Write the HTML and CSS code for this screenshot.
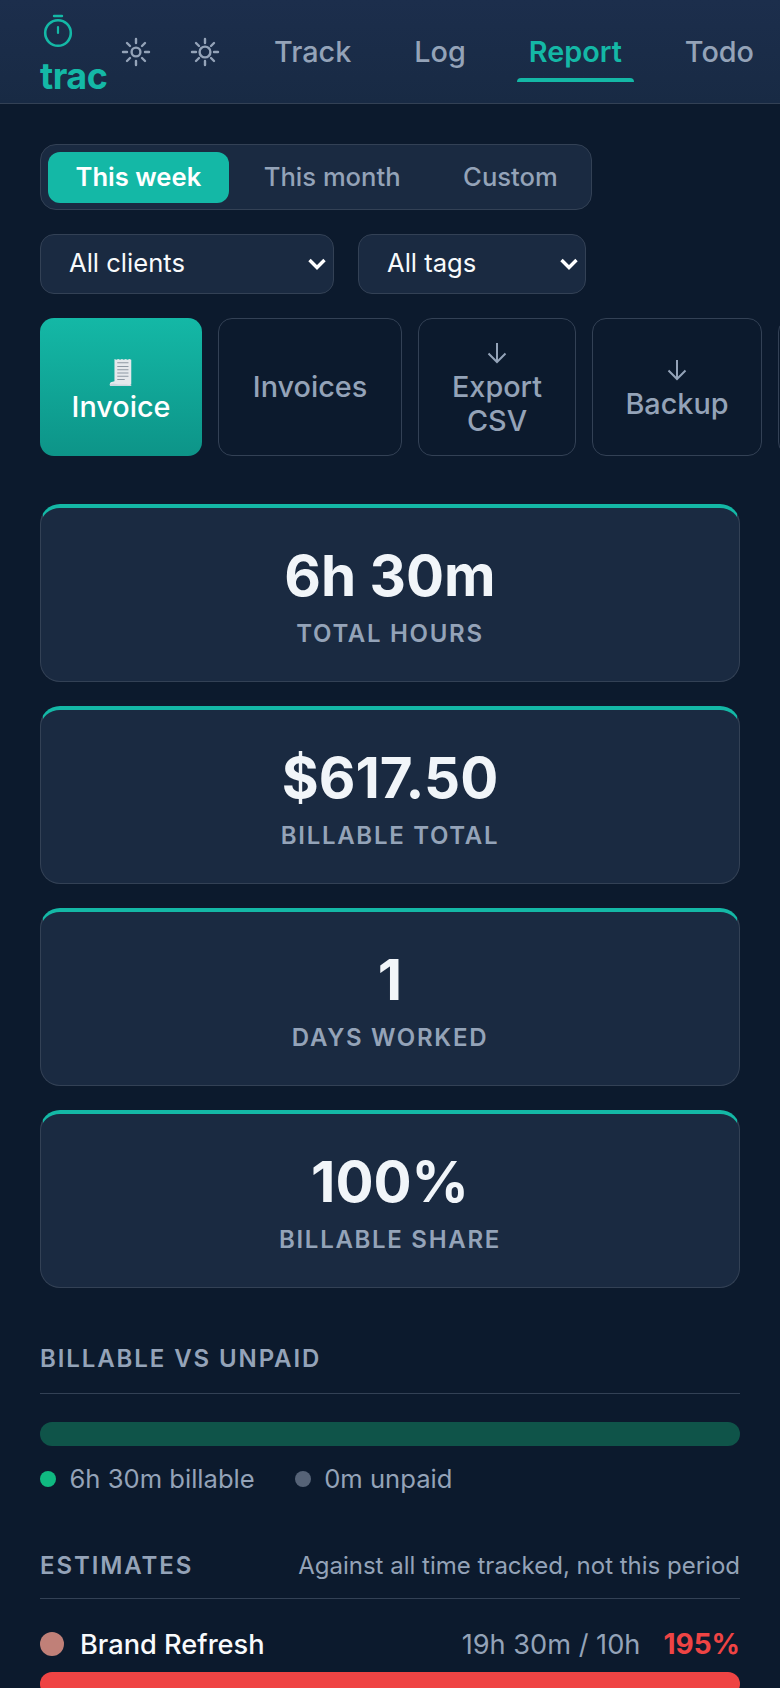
FILE: index.html
```html
<!DOCTYPE html>
<html lang="en">
<head>
<meta charset="utf-8">
<title>trac</title>
<link rel="stylesheet" href="styles.css">
</head>
<body>
<header class="topbar">
  <div class="brand">
    <svg class="brand-icon" width="30" height="36" viewBox="0 0 30 36" fill="none" stroke="#14b8a6" stroke-linecap="round">
      <path d="M11 2h8" stroke-width="2.4"/>
      <circle cx="15" cy="19" r="12.8" stroke-width="2.6"/>
      <path d="M15 13v6" stroke-width="2.2"/>
    </svg>
    <span class="brand-name">trac</span>
  </div>
  <button class="theme-btn" type="button" aria-label="Theme">
    <svg width="30" height="30" viewBox="0 0 30 30" fill="none" stroke="#94a3b8" stroke-width="2.4" stroke-linecap="round">
      <circle cx="15" cy="15" r="4.4"/>
      <path d="M15 2v4M15 24v4M2 15h4M24 15h4M6 6l3 3M21 21l3 3M6 24l3-3M21 9l3-3"/>
    </svg>
  </button>
  <button class="theme-btn" type="button" aria-label="Theme">
    <svg width="30" height="30" viewBox="0 0 30 30" fill="none" stroke="#94a3b8" stroke-width="2.4" stroke-linecap="round">
      <circle cx="15" cy="15" r="5.4"/>
      <path d="M15 2v4M15 24v4M2 15h4M24 15h4M6 6l3 3M21 21l3 3M6 24l3-3M21 9l3-3"/>
    </svg>
  </button>
  <nav class="nav">
    <a class="nav-link">Track</a>
    <a class="nav-link">Log</a>
    <a class="nav-link is-active">Report</a>
    <a class="nav-link">Todo</a>
  </nav>
</header>

<main class="page">
  <div class="segment">
    <button class="seg-btn is-active" type="button">This week</button>
    <button class="seg-btn" type="button">This month</button>
    <button class="seg-btn" type="button">Custom</button>
  </div>

  <div class="filters">
    <div class="select select-clients"><span>All clients</span>
      <svg width="18" height="12" viewBox="0 0 18 12" fill="none" stroke="#fff" stroke-width="3.4"><path d="M1.500 2l7.500 7.500L16.500 2"/></svg>
    </div>
    <div class="select select-tags"><span>All tags</span>
      <svg width="18" height="12" viewBox="0 0 18 12" fill="none" stroke="#fff" stroke-width="3.4"><path d="M1.500 2l7.500 7.500L16.500 2"/></svg>
    </div>
  </div>

  <div class="actions">
    <button class="action action-primary" type="button">
      <svg class="receipt" width="24" height="28" viewBox="0 0 24 30">
        <path d="M5 1l2 1 2-1 2 1 2-1 2 1 2-1 2 1 2-1 2 1v25.500c0 1-1 1.500-2 1.500H1c-1 0-1-.5-1-1s.5-1 1-2l4-1z" fill="#e5e8ec"/>
        <path d="M8 5h12M8 9h12M8 12.500h12M8 16h12M8 19.500h12M8 23h8" stroke="#8e98a3" stroke-width="1.100"/>
        <path d="M0 28c3-1 5-1 8 0s8 0 10 .5 4 .5 5 0V30H1c-1 0-1-1-1-2z" fill="#cfd8e0"/>
      </svg>
      <span>Invoice</span>
    </button>
    <button class="action action-invoices" type="button">Invoices</button>
    <button class="action action-export has-icon" type="button">
      <svg class="arrow" width="20" height="24" viewBox="0 0 20 24" fill="none" stroke="#94a3b8" stroke-width="2"><path d="M10 2v19M1.500 12.500L10 21l8.500-8.500"/></svg>
      <span>Export<br>CSV</span>
    </button>
    <button class="action action-backup has-icon" type="button">
      <svg class="arrow" width="20" height="24" viewBox="0 0 20 24" fill="none" stroke="#94a3b8" stroke-width="2"><path d="M10 2v19M1.500 12.500L10 21l8.500-8.500"/></svg>
      <span>Backup</span>
    </button>
    <button class="action action-more" type="button"></button>
  </div>

  <section class="stats">
    <div class="stat"><div class="stat-value">6h 30m</div><div class="stat-label">Total hours</div></div>
    <div class="stat"><div class="stat-value">$617.50</div><div class="stat-label">Billable total</div></div>
    <div class="stat"><div class="stat-value">1</div><div class="stat-label">Days worked</div></div>
    <div class="stat"><div class="stat-value">100%</div><div class="stat-label">Billable share</div></div>
  </section>

  <section class="block">
    <div class="block-head"><h2>Billable vs unpaid</h2></div>
    <div class="split-bar"></div>
    <div class="legend">
      <span class="legend-item"><i class="dot dot-green"></i>6h 30m billable</span>
      <span class="legend-item"><i class="dot dot-grey"></i>0m unpaid</span>
    </div>
  </section>

  <section class="block block-est">
    <div class="block-head"><h2>Estimates</h2><span class="note">Against all time tracked, not this period</span></div>
    <div class="est-row">
      <i class="est-dot"></i>
      <span class="est-name">Brand Refresh</span>
      <span class="est-hours">19h 30m / 10h</span>
      <span class="est-pct">195%</span>
    </div>
    <div class="est-bar"></div>
  </section>
</main>
</body>
</html>
```
FILE: styles.css
```css
* { box-sizing: border-box; }
html, body { margin: 0; height: 100%; }
html { overflow: hidden; }
body {
  width: 780px;
  height: 1688px;
  overflow: hidden;
  background: #0c1a2d;
  color: #f1f5f9;
  font-family: Inter, "Liberation Sans", sans-serif;
}
button { font-family: inherit; }

.topbar {
  height: 104px;
  padding: 13px 14px 0 40px;
  display: flex;
  align-items: flex-start;
  background: linear-gradient(180deg, #1c2e4c 0%, #182a44 100%);
  border-bottom: 1px solid #334155;
}
.brand { width: 62px; display: flex; flex-direction: column; align-items: flex-start; }
.brand-icon { display: block; margin: 1px 0 0 3px; }
.brand-name { margin-top: 7px; font-size: 36px; line-height: 38px; font-weight: 700; color: #14b8a6; letter-spacing: -0.5px; }
.theme-btn { width: 68.500px; height: 60px; margin-top: 9px; padding: 0; border: 0; background: none; display: flex; align-items: center; justify-content: center; flex: none; }
.nav { display: flex; gap: 39px; margin-left: auto; }
.nav-link {
  position: relative;
  height: 69px;
  padding: 0 12px;
  font-size: 28.800px;
  line-height: 78px;
  font-weight: 500;
  color: #94a3b8;
}
.nav-link.is-active { color: #14b8a6; font-weight: 600; }
.nav-link.is-active::after {
  content: "";
  position: absolute;
  left: 0; right: 0;
  bottom: 0;
  height: 4px;
  border-radius: 4px 4px 0 0;
  background: #14b8a6;
}

.page { padding: 40px 40px 0; }
.segment {
  width: 552px;
  height: 66px;
  padding: 6.500px;
  display: flex;
  gap: 6.500px;
  align-items: stretch;
  background: #1a2a41;
  border: 1.500px solid #334155;
  border-radius: 16px;
}
.seg-btn {
  padding: 0 28px 1px;
  border: 0;
  border-radius: 12px;
  background: none;
  font-size: 25.600px;
  font-weight: 500;
  white-space: nowrap;
  flex: none;
  color: #94a3b8;
}
.seg-btn.is-active { background: #14b8a6; color: #fff; font-weight: 600; }

.filters { margin-top: 24px; display: flex; gap: 24.500px; }
.select {
  height: 60px;
  padding: 0 7px 3px 28px;
  display: flex;
  align-items: center;
  justify-content: space-between;
  background: #1a2a41;
  border: 1.500px solid #334155;
  border-radius: 14px;
  font-size: 25.600px;
  color: #f8fafc;
}
.select svg { margin-top: 3px; }
.select-clients { width: 293.500px; }
.select-tags { width: 228px; }

.actions { margin-top: 24px; display: flex; gap: 16px; width: 800px; }
.action {
  height: 138px;
  padding: 0;
  display: flex;
  flex-direction: column;
  align-items: center;
  justify-content: center;
  background: none;
  border: 1.500px solid #334155;
  border-radius: 14px;
  font-size: 28.800px;
  font-weight: 500;
  line-height: 34px;
  color: #94a3b8;
  flex: none;
}
.action-primary {
  width: 162px;
  padding-top: 8px;
  border: 0;
  color: #fff;
  background: linear-gradient(180deg, #14b8a6 0%, #0d9488 100%);
}
.has-icon { padding-top: 5px; }
.action-invoices { width: 184px; }
.action-export { width: 158px; }
.action-backup { width: 170px; }
.action-more { width: 60px; }
.receipt { display: block; margin-bottom: 4px; }
.arrow { display: block; margin-bottom: 5px; }

.stats { margin-top: 48px; display: flex; flex-direction: column; gap: 24.500px; }
.stat {
  height: 177.500px;
  display: flex;
  flex-direction: column;
  align-items: center;
  background: #1a2a41;
  border: 1.500px solid #334155;
  border-top: 4px solid #14b8a6;
  border-radius: 20px;
}
.stat-value { margin-top: 34px; font-size: 56.500px; line-height: 68px; font-weight: 700; color: #f1f5f9; }
.stat-label { margin-top: 9px; font-size: 24px; line-height: 30px; font-weight: 600; letter-spacing: 1.700px; text-transform: uppercase; color: #94a3b8; }

.block { margin-top: 56px; }
.block-head {
  height: 50px;
  display: flex;
  align-items: flex-start;
  justify-content: space-between;
  border-bottom: 1.500px solid #334155;
}
.block-head h2 { margin: 0; font-size: 24px; line-height: 30px; font-weight: 600; letter-spacing: 1.900px; text-transform: uppercase; color: #94a3b8; }
.note { font-size: 24px; line-height: 30px; color: #94a3b8; }
.split-bar { margin-top: 28.500px; height: 24px; border-radius: 12px; background: #0f5449; }
.legend { margin-top: 16px; display: flex; gap: 40px; font-size: 25.600px; line-height: 34px; color: #94a3b8; }
.legend-item { display: flex; align-items: center; gap: 13.500px; }
.dot { width: 16px; height: 16px; border-radius: 50%; display: block; }
.dot-green { background: #10b981; }
.dot-grey { background: #566377; }

.block-est { margin-top: 55px; }
.block-est .block-head { height: 48px; }
.est-row { margin-top: 21px; height: 48px; display: flex; align-items: center; }
.est-dot { width: 24px; height: 24px; border-radius: 50%; background: #c08078; display: block; margin-right: 16px; }
.est-name { font-size: 27.200px; font-weight: 500; color: #f8fafc; }
.est-hours { margin-left: auto; font-size: 27.200px; color: #94a3b8; }
.est-pct { margin-left: 23px; font-size: 28px; font-weight: 700; color: #ef4444; }
.est-bar { margin-top: 4px; height: 24px; border-radius: 12px; background: #ef4444; }
```
